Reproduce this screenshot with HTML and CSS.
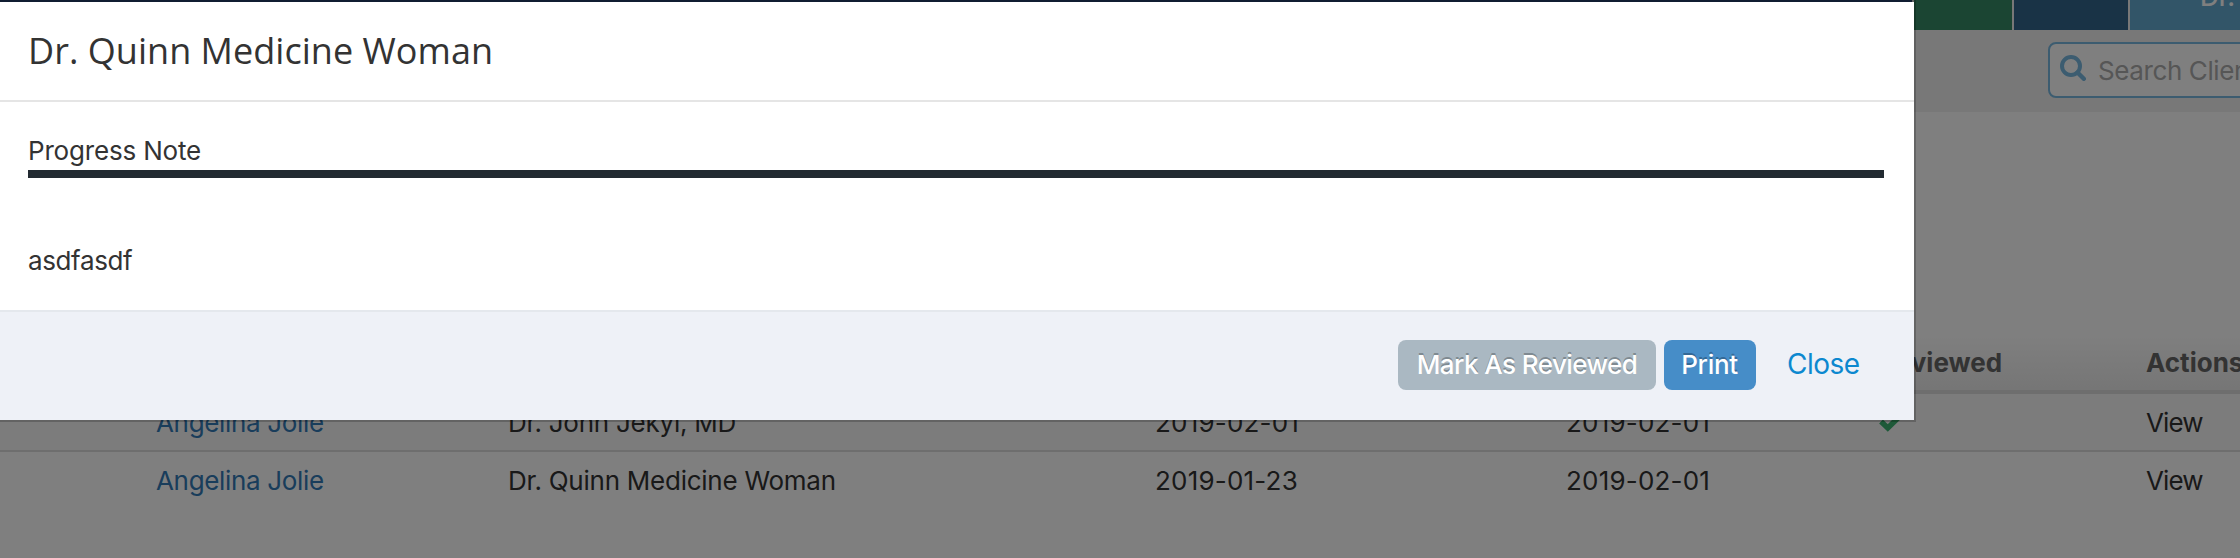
FILE: index.html
```html
<!DOCTYPE html>
<html lang="en">
<head>
<meta charset="utf-8">
<title>Progress Note</title>
<link rel="stylesheet" href="styles.css">
</head>
<body>
<div class="page">
  <nav class="topnav">
    <div class="tab tab-main"></div>
    <div class="tab tab-green"></div>
    <div class="tab tab-navy"></div>
    <div class="tab tab-user"><span class="user">Dr.</span></div>
  </nav>
  <div class="toolbar">
    <div class="search">
      <svg class="search-icon" viewBox="0 0 26 26"><circle cx="11" cy="11" r="9" fill="none" stroke="currentColor" stroke-width="4"/><path d="M17.5 17.5 L23.8 23.8" stroke="currentColor" stroke-width="4.4" stroke-linecap="round"/></svg>
      <span class="placeholder">Search Clients</span>
    </div>
  </div>
  <div class="table">
    <div class="row head">
      <span></span><span></span><span></span><span></span>
      <span class="reviewed">Reviewed</span><span class="actions">Actions</span>
    </div>
    <div class="row odd">
      <a class="name">Angelina Jolie</a><span class="doc">Dr. John Jekyl, MD</span>
      <span class="date">2019-02-01</span><span class="date">2019-02-01</span>
      <svg class="check" viewBox="0 0 26 20"><path d="M2 8.5 L8.8 15 L21.5 2.5" fill="none" stroke="currentColor" stroke-width="5.4"/></svg>
      <span class="view">View</span>
    </div>
    <div class="row">
      <a class="name">Angelina Jolie</a><span class="doc">Dr. Quinn Medicine Woman</span>
      <span class="date">2019-01-23</span><span class="date">2019-02-01</span>
      <span></span><span class="view">View</span>
    </div>
  </div>
</div>
<div class="overlay"></div>
<section class="modal">
  <header class="modal-head"><h1 class="title">Dr. Quinn Medicine Woman</h1></header>
  <div class="modal-body">
    <h2 class="note">Progress Note</h2>
    <p class="text">asdfasdf</p>
  </div>
  <footer class="modal-foot">
    <button class="btn btn-review">Mark As Reviewed</button>
    <button class="btn btn-print">Print</button>
    <a class="close">Close</a>
  </footer>
</section>
</body>
</html>
```
FILE: styles.css
```css
* { box-sizing: border-box; margin: 0; padding: 0; }

body {
  position: relative;
  width: 2240px;
  height: 558px;
  overflow: hidden;
  background: #fff;
  font: 26px/38px Inter, "Liberation Sans", sans-serif;
  color: #333;
}

.page { height: 558px; overflow: hidden; }

.topnav {
  display: grid;
  grid-template-columns: 1912px 98px 114px 110px;
  column-gap: 2px;
  height: 30px;
  background: #f0f0f0;
}
.tab { overflow: hidden; }
.tab-main { background: #284b7c; }
.tab-green { background: #368a66; }
.tab-navy { background: #32668c; }
.tab-user { padding-left: 70px; background: #64abd0; color: #fff; }
.user { display: block; margin-top: -22px; font-weight: 500; }

.toolbar { height: 82px; padding: 12px 0 0 2048px; background: #f0f0f0; }
.search {
  display: flex;
  align-items: center;
  gap: 12px;
  width: 300px;
  height: 56px;
  padding-left: 10px;
  border: 2px solid #78b8e0;
  border-radius: 8px;
  background: #fff;
}
.search-icon { width: 26px; height: 26px; margin-bottom: 4px; color: #78b8e0; }
.placeholder { padding-top: 2px; color: #acacac; letter-spacing: -.4px; white-space: nowrap; }

.table { margin-top: 222px; }
.row {
  display: grid;
  grid-template-columns: 352px 647px 411px 313px 267px 94px;
  align-items: center;
  height: 58px;
  padding-left: 156px;
  white-space: nowrap;
}
.head {
  height: 60px;
  padding-top: 2px;
  border-bottom: 4px solid #dcdcdc;
  background: linear-gradient(#fff, #ececec);
  color: #666;
  font-weight: 700;
}
.odd { padding-top: 2px; border-bottom: 2px solid #dcdcdc; background: #f9f9f9; }
.name { color: #337ab7; letter-spacing: -.33px; }
.doc { letter-spacing: -.25px; }
.date { letter-spacing: .2px; }
.view { letter-spacing: -.9px; }
.check { width: 26px; height: 20px; color: #3cb371; }

.overlay { position: absolute; inset: 0; background: rgba(0, 0, 0, .5); }

.modal {
  position: absolute;
  top: 0;
  left: 0;
  display: flex;
  flex-direction: column;
  width: 1916px;
  height: 422px;
  border: 2px solid rgba(0, 0, 0, .2);
  border-left: 0;
  background: #fff;
  background-clip: padding-box;
}
.modal-head { height: 100px; padding: 24px 28px 0; border-bottom: 2px solid #e5e5e5; }
.title { font: 400 36px/50px "Open Sans", "Noto Sans", sans-serif; letter-spacing: .03px; }
.modal-body { height: 208px; padding: 30px 30px 0 28px; }
.note { border-bottom: 8px solid #222a31; font-size: 26px; font-weight: 400; letter-spacing: -.18px; }
.text { margin-top: 64px; letter-spacing: -.38px; }
.modal-foot {
  display: flex;
  align-items: flex-start;
  justify-content: flex-end;
  gap: 8px;
  height: 110px;
  padding: 28px 26px 0 0;
  border-top: 2px solid #e4e8ed;
  background: #eef1f7;
}
.btn {
  height: 50px;
  border: 0;
  border-radius: 8px;
  color: #fff;
  font: 500 26px/50px Inter, "Liberation Sans", sans-serif;
  text-shadow: 0 -2px 0 rgba(0, 0, 0, .25);
}
.btn-review { width: 258px; background: #aab8c2; letter-spacing: -.57px; }
.btn-print { width: 92px; padding-right: 1px; background: #468dc8; letter-spacing: -.3px; }
.close { width: 124px; padding-left: 23px; color: #0c88cf; font-size: 28px; line-height: 48px; letter-spacing: -.5px; }
```
